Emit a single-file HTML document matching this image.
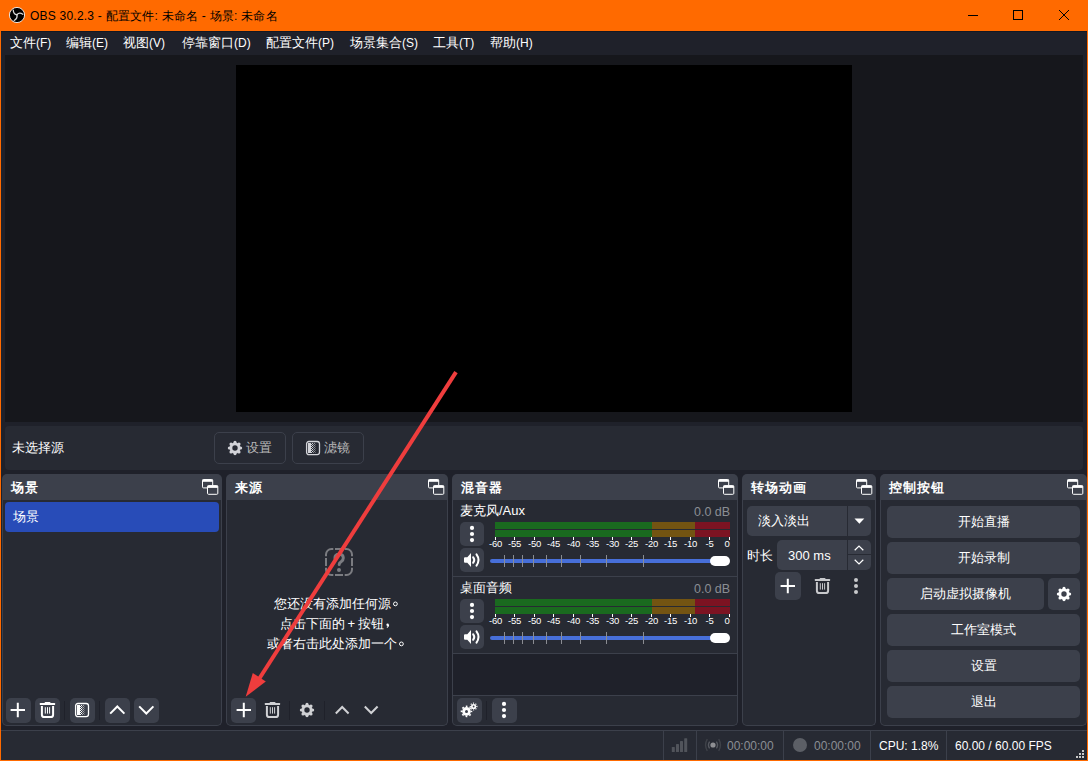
<!DOCTYPE html>
<html><head><meta charset="utf-8">
<style>
*{box-sizing:border-box;margin:0;padding:0}
html,body{width:1088px;height:761px;overflow:hidden}
body{background:#ff6a00;font-family:"Liberation Sans",sans-serif;font-size:13px;color:#fff;position:relative}
.a{position:absolute}
svg{position:absolute;overflow:visible}
.t{position:absolute;white-space:nowrap;line-height:15px}
#win{position:absolute;left:1px;top:31px;width:1086px;height:729px;background:#1f212a}
#menu{position:absolute;left:1px;top:31px;width:1086px;height:24px;background:#1f212a;border-top:1px solid #141823}
.mi{position:absolute;top:3px;font-size:13px;color:#fff;white-space:nowrap;line-height:15px}
.mi i{font-style:normal;font-size:12px}
#preview{position:absolute;left:5px;top:55px;width:1078px;height:367px;background:#16171c}
#canvas{position:absolute;left:236px;top:65px;width:616px;height:347px;background:#000}
#srcbar{position:absolute;left:5px;top:426px;width:1078px;height:44px;background:#272a33;border-radius:4px}
.tbtn{position:absolute;top:432px;height:32px;width:72px;border:1px solid #3c404b;border-radius:5px}
.dock{position:absolute;top:474px;height:252px}
.dt{position:absolute;left:0;top:0;right:0;height:26px;background:#3c404b;border-radius:5px 5px 0 0}
.dt b{position:absolute;left:9px;top:6px;font-size:13px;font-weight:bold;color:#fff;white-space:nowrap;line-height:15px;letter-spacing:1px}
.dc{position:absolute;left:0;top:26px;right:0;bottom:0;background:#272a33;border:1px solid #3c404b;border-top:none;border-radius:0 0 5px 5px}
.btn{position:absolute;width:25px;height:25px;border-radius:5px;background:#3c404b}
.sep{position:absolute;width:1px;height:19px;background:#1f212a}
#status{position:absolute;left:1px;top:730px;width:1086px;height:30px;background:#272a33;border-top:1px solid #3c404b}
.st{position:absolute;top:739px;font-size:12px;color:#fff;white-space:nowrap;line-height:14px}
.ssep{position:absolute;top:731px;width:1px;height:29px;background:#3c404b}
.cb{position:absolute;left:887px;width:193px;height:32px;background:#3c404b;border-radius:5px;text-align:center;line-height:32px;font-size:13px;color:#fff}
.pu{display:inline-block;width:13px;height:15px;vertical-align:top;position:relative}
.pu svg{left:0;top:0}
.lbl{position:absolute;font-size:9.5px;color:#fff;line-height:10px;white-space:nowrap;letter-spacing:-0.2px}
</style></head><body>
<!-- title bar -->
<svg style="left:8px;top:6px" width="18" height="18" viewBox="0 0 18 18">
<circle cx="9" cy="9" r="7.6" fill="#000" stroke="#f4f4f4" stroke-width="0.9"/>
<g fill="none" stroke="#d8d8d8" stroke-width="1.3" stroke-linecap="round">
<path d="M8.9 8.7Q5.4 8.3 5.3 4.2"/>
<path d="M8.9 8.7Q11.4 5.9 14.8 8.3"/>
<path d="M8.9 8.7Q9.8 12.4 6.2 14.5"/>
</g>
</svg>
<div class="t" style="left:30px;top:9px;font-size:12px;color:#000;letter-spacing:0.22px">OBS 30.2.3 - 配置文件: 未命名 - 场景: 未命名</div>
<svg style="left:960px;top:0" width="128" height="31" viewBox="0 0 128 31">
<path d="M8 15.5H18" stroke="#000" stroke-width="1"/>
<rect x="53.5" y="10.5" width="9" height="9" fill="none" stroke="#000" stroke-width="1"/>
<path d="M99 10L109 20M109 10L99 20" stroke="#000" stroke-width="1"/>
</svg>

<div id="win"></div>
<div id="menu">
<span class="mi" style="left:9px">文件<i>(F)</i></span>
<span class="mi" style="left:65px">编辑<i>(E)</i></span>
<span class="mi" style="left:122px">视图<i>(V)</i></span>
<span class="mi" style="left:181px">停靠窗口<i>(D)</i></span>
<span class="mi" style="left:265px">配置文件<i>(P)</i></span>
<span class="mi" style="left:349px">场景集合<i>(S)</i></span>
<span class="mi" style="left:432px">工具<i>(T)</i></span>
<span class="mi" style="left:489px">帮助<i>(H)</i></span>
</div>
<div id="preview"></div>
<div id="canvas"></div>

<!-- source toolbar -->
<div id="srcbar"></div>
<div class="t" style="left:12px;top:440px">未选择源</div>
<div class="tbtn" style="left:214px"></div>
<div class="tbtn" style="left:292px"></div>
<svg style="left:227px;top:440px" width="16" height="16" viewBox="0 0 16 16"><g fill="#d2d3d8"><circle cx="8" cy="8" r="5.5"/><circle cx="13.60" cy="8.00" r="1.6"/><circle cx="11.96" cy="11.96" r="1.6"/><circle cx="8.00" cy="13.60" r="1.6"/><circle cx="4.04" cy="11.96" r="1.6"/><circle cx="2.40" cy="8.00" r="1.6"/><circle cx="4.04" cy="4.04" r="1.6"/><circle cx="8.00" cy="2.40" r="1.6"/><circle cx="11.96" cy="4.04" r="1.6"/></g><circle cx="8" cy="8" r="2.7" fill="#272a33"/></svg>
<div class="t" style="left:246px;top:440px;color:#b8b8b8">设置</div>
<svg style="left:305px;top:440px" width="16" height="16" viewBox="0 0 16 16"><rect x="1.6" y="1.5" width="12.9" height="13.1" rx="2.3" fill="none" stroke="#d2d3d8" stroke-width="1.3"/><rect x="3" y="3" width="3" height="10" fill="#d2d3d8"/><rect x="7" y="3" width="1" height="1" fill="#d2d3d8"/><rect x="9" y="3" width="1" height="1" fill="#8e9096"/><rect x="6" y="4" width="1" height="1" fill="#d2d3d8"/><rect x="8" y="4" width="1" height="1" fill="#8e9096"/><rect x="10" y="4" width="1" height="1" fill="#5d5f66"/><rect x="7" y="5" width="1" height="1" fill="#d2d3d8"/><rect x="9" y="5" width="1" height="1" fill="#8e9096"/><rect x="6" y="6" width="1" height="1" fill="#d2d3d8"/><rect x="8" y="6" width="1" height="1" fill="#8e9096"/><rect x="10" y="6" width="1" height="1" fill="#5d5f66"/><rect x="7" y="7" width="1" height="1" fill="#d2d3d8"/><rect x="9" y="7" width="1" height="1" fill="#8e9096"/><rect x="6" y="8" width="1" height="1" fill="#d2d3d8"/><rect x="8" y="8" width="1" height="1" fill="#8e9096"/><rect x="10" y="8" width="1" height="1" fill="#5d5f66"/><rect x="7" y="9" width="1" height="1" fill="#d2d3d8"/><rect x="9" y="9" width="1" height="1" fill="#8e9096"/><rect x="6" y="10" width="1" height="1" fill="#d2d3d8"/><rect x="8" y="10" width="1" height="1" fill="#8e9096"/><rect x="10" y="10" width="1" height="1" fill="#5d5f66"/><rect x="7" y="11" width="1" height="1" fill="#d2d3d8"/><rect x="9" y="11" width="1" height="1" fill="#8e9096"/><rect x="6" y="12" width="1" height="1" fill="#d2d3d8"/><rect x="8" y="12" width="1" height="1" fill="#8e9096"/><rect x="10" y="12" width="1" height="1" fill="#5d5f66"/></svg>
<div class="t" style="left:324px;top:440px;color:#b8b8b8">滤镜</div>

<!-- docks -->
<div class="dock" style="left:2px;width:220px"><div class="dt"><b>场景</b></div><div class="dc"></div></div>
<div class="dock" style="left:226px;width:222px"><div class="dt"><b>来源</b></div><div class="dc"></div></div>
<div class="dock" style="left:452px;width:286px"><div class="dt"><b>混音器</b></div><div class="dc"></div></div>
<div class="dock" style="left:742px;width:134px"><div class="dt"><b>转场动画</b></div><div class="dc"></div></div>
<div class="dock" style="left:880px;width:207px"><div class="dt"><b>控制按钮</b></div><div class="dc"></div></div>

<!-- float icons -->
<svg style="left:202px;top:479px" width="17" height="17" viewBox="0 0 17 17" id="fl1">
<rect x="0.5" y="0.5" width="10.2" height="8.4" rx="1" fill="none" stroke="#fff" stroke-width="1"/>
<rect x="0.5" y="0.5" width="10.2" height="2.3" fill="#fff"/>
<rect x="5.5" y="6.6" width="10.3" height="8.7" rx="1" fill="#3c404b" stroke="#fff" stroke-width="1"/>
<rect x="5.5" y="6.6" width="10.3" height="2.3" fill="#fff"/>
</svg>
<svg style="left:428px;top:479px" width="17" height="17" viewBox="0 0 17 17">
<rect x="0.5" y="0.5" width="10.2" height="8.4" rx="1" fill="none" stroke="#fff" stroke-width="1"/>
<rect x="0.5" y="0.5" width="10.2" height="2.3" fill="#fff"/>
<rect x="5.5" y="6.6" width="10.3" height="8.7" rx="1" fill="#3c404b" stroke="#fff" stroke-width="1"/>
<rect x="5.5" y="6.6" width="10.3" height="2.3" fill="#fff"/>
</svg>
<svg style="left:718px;top:479px" width="17" height="17" viewBox="0 0 17 17">
<rect x="0.5" y="0.5" width="10.2" height="8.4" rx="1" fill="none" stroke="#fff" stroke-width="1"/>
<rect x="0.5" y="0.5" width="10.2" height="2.3" fill="#fff"/>
<rect x="5.5" y="6.6" width="10.3" height="8.7" rx="1" fill="#3c404b" stroke="#fff" stroke-width="1"/>
<rect x="5.5" y="6.6" width="10.3" height="2.3" fill="#fff"/>
</svg>
<svg style="left:856px;top:479px" width="17" height="17" viewBox="0 0 17 17">
<rect x="0.5" y="0.5" width="10.2" height="8.4" rx="1" fill="none" stroke="#fff" stroke-width="1"/>
<rect x="0.5" y="0.5" width="10.2" height="2.3" fill="#fff"/>
<rect x="5.5" y="6.6" width="10.3" height="8.7" rx="1" fill="#3c404b" stroke="#fff" stroke-width="1"/>
<rect x="5.5" y="6.6" width="10.3" height="2.3" fill="#fff"/>
</svg>
<svg style="left:1067px;top:479px" width="17" height="17" viewBox="0 0 17 17">
<rect x="0.5" y="0.5" width="10.2" height="8.4" rx="1" fill="none" stroke="#fff" stroke-width="1"/>
<rect x="0.5" y="0.5" width="10.2" height="2.3" fill="#fff"/>
<rect x="5.5" y="6.6" width="10.3" height="8.7" rx="1" fill="#3c404b" stroke="#fff" stroke-width="1"/>
<rect x="5.5" y="6.6" width="10.3" height="2.3" fill="#fff"/>
</svg>

<!-- SCENE dock content -->
<div class="a" style="left:5px;top:502px;width:214px;height:30px;background:#284cb8;border-radius:4px"></div>
<div class="t" style="left:13px;top:509px">场景</div>
<div class="btn" style="left:6px;top:698px"></div>
<div class="btn" style="left:35px;top:698px"></div>
<div class="sep" style="left:64px;top:701px"></div>
<div class="btn" style="left:70px;top:698px"></div>
<div class="sep" style="left:99px;top:701px"></div>
<div class="btn" style="left:105px;top:698px"></div>
<div class="btn" style="left:134px;top:698px"></div>
<svg style="left:10px;top:702px" width="16" height="16" viewBox="0 0 16 16"><path d="M7.8 0.8V15.2M0.6 8H15" stroke="#fff" stroke-width="2"/></svg>
<svg style="left:39px;top:701px" width="17" height="18" viewBox="0 0 17 18" id="trash">
<rect x="0.8" y="1.9" width="15.3" height="2.1" rx="0.6" fill="#fff"/>
<rect x="5.6" y="0.9" width="5.9" height="2" rx="0.8" fill="#fff"/>
<path d="M2.9 5V13.7Q2.9 16.1 5.3 16.1H11.7Q14.1 16.1 14.1 13.7V5" fill="none" stroke="#fff" stroke-width="2"/>
<path d="M6.3 6.2V12.6M8.5 6.2V12.6M10.6 6.2V12.6" stroke="#fff" stroke-width="1"/>
</svg>
<svg style="left:74px;top:702px" width="16" height="16" viewBox="0 0 16 16"><rect x="1.6" y="1.5" width="12.9" height="13.1" rx="2.3" fill="none" stroke="#fff" stroke-width="1.3"/><rect x="3" y="3" width="3" height="10" fill="#fff"/><rect x="7" y="3" width="1" height="1" fill="#fff"/><rect x="9" y="3" width="1" height="1" fill="#a8a9ad"/><rect x="6" y="4" width="1" height="1" fill="#fff"/><rect x="8" y="4" width="1" height="1" fill="#a8a9ad"/><rect x="10" y="4" width="1" height="1" fill="#6a6c72"/><rect x="7" y="5" width="1" height="1" fill="#fff"/><rect x="9" y="5" width="1" height="1" fill="#a8a9ad"/><rect x="6" y="6" width="1" height="1" fill="#fff"/><rect x="8" y="6" width="1" height="1" fill="#a8a9ad"/><rect x="10" y="6" width="1" height="1" fill="#6a6c72"/><rect x="7" y="7" width="1" height="1" fill="#fff"/><rect x="9" y="7" width="1" height="1" fill="#a8a9ad"/><rect x="6" y="8" width="1" height="1" fill="#fff"/><rect x="8" y="8" width="1" height="1" fill="#a8a9ad"/><rect x="10" y="8" width="1" height="1" fill="#6a6c72"/><rect x="7" y="9" width="1" height="1" fill="#fff"/><rect x="9" y="9" width="1" height="1" fill="#a8a9ad"/><rect x="6" y="10" width="1" height="1" fill="#fff"/><rect x="8" y="10" width="1" height="1" fill="#a8a9ad"/><rect x="10" y="10" width="1" height="1" fill="#6a6c72"/><rect x="7" y="11" width="1" height="1" fill="#fff"/><rect x="9" y="11" width="1" height="1" fill="#a8a9ad"/><rect x="6" y="12" width="1" height="1" fill="#fff"/><rect x="8" y="12" width="1" height="1" fill="#a8a9ad"/><rect x="10" y="12" width="1" height="1" fill="#6a6c72"/></svg>
<svg style="left:109px;top:705px" width="17" height="10" viewBox="0 0 17 10"><path d="M1.2 8.6L8.3 1.5L15.4 8.6" fill="none" stroke="#fff" stroke-width="2"/></svg>
<svg style="left:138px;top:705px" width="17" height="10" viewBox="0 0 17 10"><path d="M1.2 1.4L8.3 8.5L15.4 1.4" fill="none" stroke="#fff" stroke-width="2"/></svg>

<!-- SOURCES dock content -->
<svg style="left:325px;top:548px" width="29" height="29" viewBox="0 0 29 29">
<path d="M1 8.3V6.5A5.5 5.5 0 0 1 6.5 1H8.3M19.7 1H21.5A5.5 5.5 0 0 1 27 6.5V8.3M27 19.7V21.5A5.5 5.5 0 0 1 21.5 27H19.7M8.3 27H6.5A5.5 5.5 0 0 1 1 21.5V19.7M10 1H18M27 10V18M18 27H10M1 18V10" fill="none" stroke="#7b7c81" stroke-width="2"/>
<path d="M9.9 10.3Q9.9 6.3 14.1 6.3Q18.3 6.3 18.3 10Q18.3 12.4 16.1 13.7Q14.2 14.8 14.2 16.6" fill="none" stroke="#7b7c81" stroke-width="3" stroke-linecap="round"/>
<circle cx="14" cy="21.9" r="2" fill="#7b7c81"/>
</svg>
<div class="t" style="left:274px;top:596px">您还没有添加任何源<span class="pu"><svg width="13" height="15" viewBox="0 0 13 15"><circle cx="4.4" cy="7.9" r="1.9" fill="none" stroke="#fff" stroke-width="1"/></svg></span></div>
<div class="t" style="left:280px;top:616px;word-spacing:-1px">点击下面的 + 按钮<span class="pu"><svg width="13" height="15" viewBox="0 0 13 15"><circle cx="3.6" cy="8.7" r="1.2" fill="#fff"/><path d="M4.6 8.9Q4.7 10.6 2.9 11.6" fill="none" stroke="#fff" stroke-width="1.2"/></svg></span></div>
<div class="t" style="left:267px;top:636px">或者右击此处添加一个<span class="pu"><svg width="13" height="15" viewBox="0 0 13 15"><circle cx="4.4" cy="7.9" r="1.9" fill="none" stroke="#fff" stroke-width="1"/></svg></span></div>
<div class="btn" style="left:231px;top:698px"></div>
<svg style="left:236px;top:702px" width="16" height="16" viewBox="0 0 16 16"><path d="M7.8 0.8V15.2M0.6 8H15" stroke="#fff" stroke-width="2"/></svg>
<svg style="left:264px;top:701px" width="17" height="18" viewBox="0 0 17 18">
<rect x="0.8" y="1.9" width="15.3" height="2.1" rx="0.6" fill="#d0d1d4"/>
<rect x="5.6" y="0.9" width="5.9" height="2" rx="0.8" fill="#d0d1d4"/>
<path d="M2.9 5V13.7Q2.9 16.1 5.3 16.1H11.7Q14.1 16.1 14.1 13.7V5" fill="none" stroke="#d0d1d4" stroke-width="2"/>
<path d="M6.3 6.2V12.6M8.5 6.2V12.6M10.6 6.2V12.6" stroke="#d0d1d4" stroke-width="1"/>
</svg>
<div class="sep" style="left:289px;top:701px"></div>
<svg style="left:299px;top:702px" width="16" height="16" viewBox="0 0 16 16"><g fill="#d0d1d4"><circle cx="8" cy="8" r="5.5"/><circle cx="13.60" cy="8.00" r="1.6"/><circle cx="11.96" cy="11.96" r="1.6"/><circle cx="8.00" cy="13.60" r="1.6"/><circle cx="4.04" cy="11.96" r="1.6"/><circle cx="2.40" cy="8.00" r="1.6"/><circle cx="4.04" cy="4.04" r="1.6"/><circle cx="8.00" cy="2.40" r="1.6"/><circle cx="11.96" cy="4.04" r="1.6"/></g><circle cx="8" cy="8" r="2.7" fill="#272a33"/></svg>
<div class="sep" style="left:324px;top:701px"></div>
<svg style="left:335px;top:705px" width="15" height="10" viewBox="0 0 15 10"><path d="M0.8 8.5L7.2 2L13.6 8.5" fill="none" stroke="#d0d1d4" stroke-width="2"/></svg>
<svg style="left:364px;top:705px" width="15" height="10" viewBox="0 0 15 10"><path d="M0.8 1.5L7.2 8L13.6 1.5" fill="none" stroke="#d0d1d4" stroke-width="2"/></svg>

<!-- MIXER dock content -->
<div class="a" style="left:453px;top:576px;width:284px;height:1px;background:#3c404b"></div>
<div class="a" style="left:453px;top:653px;width:284px;height:1px;background:#3c404b"></div>
<div class="a" style="left:453px;top:654px;width:284px;height:41px;background:#1f212a"></div>
<div class="a" style="left:453px;top:695px;width:284px;height:1px;background:#3c404b"></div>

<!-- MIXER items -->
<div class="t" style="left:460px;top:503px">麦克风/Aux</div>
<div class="t" style="left:694px;top:505px;font-size:12.5px;color:#8b8e94">0.0 dB</div>
<div class="btn" style="left:460px;top:522px;width:24px;height:24px"></div>
<div class="btn" style="left:460px;top:548px;width:24px;height:24px"></div>
<svg style="left:460px;top:522px" width="24" height="24" viewBox="0 0 24 24"><g fill="#fff"><circle cx="12" cy="5.9" r="2.1"/><circle cx="12" cy="12" r="2.1"/><circle cx="12" cy="18.1" r="2.1"/></g></svg>
<svg style="left:460px;top:548px" width="24" height="24" viewBox="0 0 24 24"><path d="M5 9.3H7.3L11 5.1V18.9L7.3 14.7H5Q4 14.7 4 13.7V10.3Q4 9.3 5 9.3Z" fill="#fff"/><path d="M13.1 9.2Q15.4 12 13.1 14.8" fill="none" stroke="#fff" stroke-width="2" stroke-linecap="round"/><path d="M16.5 6.4Q20.5 12 16.5 17.6" fill="none" stroke="#fff" stroke-width="2" stroke-linecap="round"/></svg>
<div class="a" style="left:495px;top:522px;width:157px;height:7px;background:#1a6a1f"></div>
<div class="a" style="left:652px;top:522px;width:43px;height:7px;background:#735412"></div>
<div class="a" style="left:695px;top:522px;width:35px;height:7px;background:#7c1322"></div>
<div class="a" style="left:495px;top:530px;width:157px;height:7px;background:#1a6a1f"></div>
<div class="a" style="left:652px;top:530px;width:43px;height:7px;background:#735412"></div>
<div class="a" style="left:695px;top:530px;width:35px;height:7px;background:#7c1322"></div>
<div class="a" style="left:495px;top:537px;width:1px;height:3px;background:#fff"></div>
<div class="lbl" style="left:475.5px;width:40px;text-align:center;top:539px">-60</div>
<div class="a" style="left:514px;top:537px;width:1px;height:3px;background:#fff"></div>
<div class="lbl" style="left:494.5px;width:40px;text-align:center;top:539px">-55</div>
<div class="a" style="left:534px;top:537px;width:1px;height:3px;background:#fff"></div>
<div class="lbl" style="left:514.5px;width:40px;text-align:center;top:539px">-50</div>
<div class="a" style="left:553px;top:537px;width:1px;height:3px;background:#fff"></div>
<div class="lbl" style="left:533.5px;width:40px;text-align:center;top:539px">-45</div>
<div class="a" style="left:573px;top:537px;width:1px;height:3px;background:#fff"></div>
<div class="lbl" style="left:553.5px;width:40px;text-align:center;top:539px">-40</div>
<div class="a" style="left:592px;top:537px;width:1px;height:3px;background:#fff"></div>
<div class="lbl" style="left:572.5px;width:40px;text-align:center;top:539px">-35</div>
<div class="a" style="left:612px;top:537px;width:1px;height:3px;background:#fff"></div>
<div class="lbl" style="left:592.5px;width:40px;text-align:center;top:539px">-30</div>
<div class="a" style="left:631px;top:537px;width:1px;height:3px;background:#fff"></div>
<div class="lbl" style="left:611.5px;width:40px;text-align:center;top:539px">-25</div>
<div class="a" style="left:651px;top:537px;width:1px;height:3px;background:#fff"></div>
<div class="lbl" style="left:631.5px;width:40px;text-align:center;top:539px">-20</div>
<div class="a" style="left:670px;top:537px;width:1px;height:3px;background:#fff"></div>
<div class="lbl" style="left:650.5px;width:40px;text-align:center;top:539px">-15</div>
<div class="a" style="left:690px;top:537px;width:1px;height:3px;background:#fff"></div>
<div class="lbl" style="left:670.5px;width:40px;text-align:center;top:539px">-10</div>
<div class="a" style="left:709px;top:537px;width:1px;height:3px;background:#fff"></div>
<div class="lbl" style="left:689.5px;width:40px;text-align:center;top:539px">-5</div>
<div class="a" style="left:729px;top:537px;width:1px;height:3px;background:#fff"></div>
<div class="lbl" style="right:358.5px;top:539px">0</div>
<div class="a" style="left:490px;top:559px;width:228px;height:4px;background:#476fd9;border-radius:2px"></div>
<div class="a" style="left:504px;top:555px;width:1px;height:12px;background:#8a8c92"></div>
<div class="a" style="left:513px;top:555px;width:1px;height:12px;background:#8a8c92"></div>
<div class="a" style="left:522px;top:555px;width:1px;height:12px;background:#8a8c92"></div>
<div class="a" style="left:533px;top:555px;width:1px;height:12px;background:#8a8c92"></div>
<div class="a" style="left:546px;top:555px;width:1px;height:12px;background:#8a8c92"></div>
<div class="a" style="left:561px;top:555px;width:1px;height:12px;background:#8a8c92"></div>
<div class="a" style="left:580px;top:555px;width:1px;height:12px;background:#8a8c92"></div>
<div class="a" style="left:606px;top:555px;width:1px;height:12px;background:#8a8c92"></div>
<div class="a" style="left:643px;top:555px;width:1px;height:12px;background:#8a8c92"></div>
<div class="a" style="left:710px;top:556px;width:20px;height:10px;background:#fff;border-radius:5px"></div>
<div class="t" style="left:460px;top:580px">桌面音频</div>
<div class="t" style="left:694px;top:582px;font-size:12.5px;color:#8b8e94">0.0 dB</div>
<div class="btn" style="left:460px;top:599px;width:24px;height:24px"></div>
<div class="btn" style="left:460px;top:625px;width:24px;height:24px"></div>
<svg style="left:460px;top:599px" width="24" height="24" viewBox="0 0 24 24"><g fill="#fff"><circle cx="12" cy="5.9" r="2.1"/><circle cx="12" cy="12" r="2.1"/><circle cx="12" cy="18.1" r="2.1"/></g></svg>
<svg style="left:460px;top:625px" width="24" height="24" viewBox="0 0 24 24"><path d="M5 9.3H7.3L11 5.1V18.9L7.3 14.7H5Q4 14.7 4 13.7V10.3Q4 9.3 5 9.3Z" fill="#fff"/><path d="M13.1 9.2Q15.4 12 13.1 14.8" fill="none" stroke="#fff" stroke-width="2" stroke-linecap="round"/><path d="M16.5 6.4Q20.5 12 16.5 17.6" fill="none" stroke="#fff" stroke-width="2" stroke-linecap="round"/></svg>
<div class="a" style="left:495px;top:599px;width:157px;height:7px;background:#1a6a1f"></div>
<div class="a" style="left:652px;top:599px;width:43px;height:7px;background:#735412"></div>
<div class="a" style="left:695px;top:599px;width:35px;height:7px;background:#7c1322"></div>
<div class="a" style="left:495px;top:607px;width:157px;height:7px;background:#1a6a1f"></div>
<div class="a" style="left:652px;top:607px;width:43px;height:7px;background:#735412"></div>
<div class="a" style="left:695px;top:607px;width:35px;height:7px;background:#7c1322"></div>
<div class="a" style="left:495px;top:614px;width:1px;height:3px;background:#fff"></div>
<div class="lbl" style="left:475.5px;width:40px;text-align:center;top:616px">-60</div>
<div class="a" style="left:514px;top:614px;width:1px;height:3px;background:#fff"></div>
<div class="lbl" style="left:494.5px;width:40px;text-align:center;top:616px">-55</div>
<div class="a" style="left:534px;top:614px;width:1px;height:3px;background:#fff"></div>
<div class="lbl" style="left:514.5px;width:40px;text-align:center;top:616px">-50</div>
<div class="a" style="left:553px;top:614px;width:1px;height:3px;background:#fff"></div>
<div class="lbl" style="left:533.5px;width:40px;text-align:center;top:616px">-45</div>
<div class="a" style="left:573px;top:614px;width:1px;height:3px;background:#fff"></div>
<div class="lbl" style="left:553.5px;width:40px;text-align:center;top:616px">-40</div>
<div class="a" style="left:592px;top:614px;width:1px;height:3px;background:#fff"></div>
<div class="lbl" style="left:572.5px;width:40px;text-align:center;top:616px">-35</div>
<div class="a" style="left:612px;top:614px;width:1px;height:3px;background:#fff"></div>
<div class="lbl" style="left:592.5px;width:40px;text-align:center;top:616px">-30</div>
<div class="a" style="left:631px;top:614px;width:1px;height:3px;background:#fff"></div>
<div class="lbl" style="left:611.5px;width:40px;text-align:center;top:616px">-25</div>
<div class="a" style="left:651px;top:614px;width:1px;height:3px;background:#fff"></div>
<div class="lbl" style="left:631.5px;width:40px;text-align:center;top:616px">-20</div>
<div class="a" style="left:670px;top:614px;width:1px;height:3px;background:#fff"></div>
<div class="lbl" style="left:650.5px;width:40px;text-align:center;top:616px">-15</div>
<div class="a" style="left:690px;top:614px;width:1px;height:3px;background:#fff"></div>
<div class="lbl" style="left:670.5px;width:40px;text-align:center;top:616px">-10</div>
<div class="a" style="left:709px;top:614px;width:1px;height:3px;background:#fff"></div>
<div class="lbl" style="left:689.5px;width:40px;text-align:center;top:616px">-5</div>
<div class="a" style="left:729px;top:614px;width:1px;height:3px;background:#fff"></div>
<div class="lbl" style="right:358.5px;top:616px">0</div>
<div class="a" style="left:490px;top:636px;width:228px;height:4px;background:#476fd9;border-radius:2px"></div>
<div class="a" style="left:504px;top:632px;width:1px;height:12px;background:#8a8c92"></div>
<div class="a" style="left:513px;top:632px;width:1px;height:12px;background:#8a8c92"></div>
<div class="a" style="left:522px;top:632px;width:1px;height:12px;background:#8a8c92"></div>
<div class="a" style="left:533px;top:632px;width:1px;height:12px;background:#8a8c92"></div>
<div class="a" style="left:546px;top:632px;width:1px;height:12px;background:#8a8c92"></div>
<div class="a" style="left:561px;top:632px;width:1px;height:12px;background:#8a8c92"></div>
<div class="a" style="left:580px;top:632px;width:1px;height:12px;background:#8a8c92"></div>
<div class="a" style="left:606px;top:632px;width:1px;height:12px;background:#8a8c92"></div>
<div class="a" style="left:643px;top:632px;width:1px;height:12px;background:#8a8c92"></div>
<div class="a" style="left:710px;top:633px;width:20px;height:10px;background:#fff;border-radius:5px"></div>
<div class="btn" style="left:457px;top:698px"></div>
<svg style="left:457px;top:698px" width="25" height="25" viewBox="0 0 25 25">
<circle cx="9.5" cy="13.4" r="4.3" fill="#fff"/>
<circle cx="9.5" cy="13.4" r="5" fill="none" stroke="#fff" stroke-width="1.6" stroke-dasharray="1.732 2.117" stroke-dashoffset="0.866"/>
<circle cx="9.5" cy="13.4" r="1.5" fill="#3c404b"/>
<circle cx="16.6" cy="8.5" r="2.6" fill="#fff"/>
<circle cx="16.6" cy="8.5" r="3.3" fill="none" stroke="#fff" stroke-width="1.2" stroke-dasharray="1.131 1.382" stroke-dashoffset="0.565"/>
<circle cx="16.6" cy="8.5" r="0.9" fill="#3c404b"/>
</svg>
<div class="sep" style="left:486px;top:701px"></div>
<div class="btn" style="left:492px;top:698px"></div>
<svg style="left:492px;top:698px" width="25" height="25" viewBox="0 0 25 25"><g fill="#fff"><circle cx="12" cy="5.9" r="2.1"/><circle cx="12" cy="12" r="2.1"/><circle cx="12" cy="18.1" r="2.1"/></g></svg>


<!-- TRANSITIONS dock content -->
<div class="a" style="left:747px;top:506px;width:124px;height:30px;background:#3c404b;border-radius:5px"></div>
<div class="a" style="left:847px;top:506px;width:1px;height:30px;background:#272a33"></div>
<div class="t" style="left:758px;top:513px">淡入淡出</div>
<svg style="left:854px;top:518px" width="11" height="7" viewBox="0 0 11 7"><path d="M0.5 0.5H10.3L5.4 5.8Z" fill="#fff"/></svg>
<div class="t" style="left:747px;top:548px">时长</div>
<div class="a" style="left:777px;top:540px;width:94px;height:30px;background:#3c404b;border-radius:5px"></div>
<div class="a" style="left:847px;top:540px;width:1px;height:30px;background:#272a33"></div>
<div class="a" style="left:848px;top:554px;width:23px;height:1px;background:#272a33"></div>
<div class="t" style="left:788px;top:548px">300 ms</div>
<svg style="left:854px;top:545px" width="10" height="6" viewBox="0 0 10 6"><path d="M0.7 5.2L5 1L9.3 5.2" fill="none" stroke="#fff" stroke-width="1.2"/></svg>
<svg style="left:854px;top:559px" width="10" height="6" viewBox="0 0 10 6"><path d="M0.7 0.8L5 5L9.3 0.8" fill="none" stroke="#fff" stroke-width="1.2"/></svg>
<div class="btn" style="left:775px;top:572px;width:26px;height:28px"></div>
<svg style="left:780px;top:578px" width="16" height="16" viewBox="0 0 16 16"><path d="M7.8 0.8V15.2M0.6 8H15" stroke="#fff" stroke-width="2"/></svg>
<svg style="left:814px;top:577px" width="17" height="18" viewBox="0 0 17 18">
<rect x="0.8" y="1.9" width="15.3" height="2.1" rx="0.6" fill="#c8c9cc"/>
<rect x="5.6" y="0.9" width="5.9" height="2" rx="0.8" fill="#c8c9cc"/>
<path d="M2.9 5V13.7Q2.9 16.1 5.3 16.1H11.7Q14.1 16.1 14.1 13.7V5" fill="none" stroke="#c8c9cc" stroke-width="2"/>
<path d="M6.3 6.2V12.6M8.5 6.2V12.6M10.6 6.2V12.6" stroke="#c8c9cc" stroke-width="1"/>
</svg>
<svg style="left:850px;top:576px" width="12" height="20" viewBox="0 0 12 20"><g fill="#c8c9cc"><circle cx="6" cy="4.1" r="2"/><circle cx="6" cy="10" r="2"/><circle cx="6" cy="15.9" r="2"/></g></svg>

<!-- CONTROLS dock content -->
<div class="cb" style="top:506px">开始直播</div>
<div class="cb" style="top:542px">开始录制</div>
<div class="cb" style="top:578px;width:157px">启动虚拟摄像机</div>
<div class="btn" style="left:1048px;top:578px;width:32px;height:32px"></div>
<svg style="left:1056px;top:586px" width="16" height="16" viewBox="0 0 16 16"><g fill="#fff"><circle cx="8" cy="8" r="5.5"/><circle cx="13.60" cy="8.00" r="1.6"/><circle cx="11.96" cy="11.96" r="1.6"/><circle cx="8.00" cy="13.60" r="1.6"/><circle cx="4.04" cy="11.96" r="1.6"/><circle cx="2.40" cy="8.00" r="1.6"/><circle cx="4.04" cy="4.04" r="1.6"/><circle cx="8.00" cy="2.40" r="1.6"/><circle cx="11.96" cy="4.04" r="1.6"/></g><circle cx="8" cy="8" r="2.7" fill="#3c404b"/></svg>
<div class="cb" style="top:614px">工作室模式</div>
<div class="cb" style="top:650px">设置</div>
<div class="cb" style="top:686px">退出</div>

<!-- status bar -->
<div id="status"></div>
<div class="ssep" style="left:663px"></div>
<div class="ssep" style="left:696px"></div>
<div class="ssep" style="left:783px"></div>
<div class="ssep" style="left:870px"></div>
<div class="ssep" style="left:946px"></div>
<svg style="left:671px;top:738px" width="17" height="15" viewBox="0 0 17 15"><g fill="#51545b"><rect x="0.8" y="9" width="3" height="5" rx="0.6"/><rect x="5" y="6" width="3" height="8" rx="0.6"/><rect x="9" y="3" width="3" height="11" rx="0.6"/><rect x="13.2" y="0.2" width="3" height="13.8" rx="0.6"/></g></svg>
<svg style="left:703px;top:737px" width="20" height="16" viewBox="0 0 20 16">
<circle cx="10" cy="8" r="2.6" fill="#8e8f93"/>
<path d="M6.6 4.6Q4.3 8 6.6 11.4M13.4 4.6Q15.7 8 13.4 11.4" fill="none" stroke="#55585f" stroke-width="1.4"/>
<path d="M4.3 2.2Q0.8 8 4.3 13.8M15.7 2.2Q19.2 8 15.7 13.8" fill="none" stroke="#3f4249" stroke-width="1.4"/>
</svg>
<div class="st" style="left:727px;color:#8b8e94">00:00:00</div>
<svg style="left:792px;top:737px" width="16" height="16" viewBox="0 0 16 16"><circle cx="8" cy="8" r="7" fill="#5c5f66"/></svg>
<div class="st" style="left:814px;color:#8b8e94">00:00:00</div>
<div class="st" style="left:879px">CPU: 1.8%</div>
<div class="st" style="left:955px">60.00 / 60.00 FPS</div>
<svg style="left:1076px;top:750px" width="9" height="9" viewBox="0 0 9 9"><g fill="#c9c9c9"><rect x="6" y="0" width="2" height="2"/><rect x="3" y="3" width="2" height="2"/><rect x="6" y="3" width="2" height="2"/><rect x="0" y="6" width="2" height="2"/><rect x="3" y="6" width="2" height="2"/><rect x="6" y="6" width="2" height="2"/></g></svg>

<!-- red arrow -->
<svg style="left:0;top:0" width="1088" height="761" viewBox="0 0 1088 761">
<path d="M456 372.2L258.4 680" stroke="#ef3d3d" stroke-width="4"/>
<path d="M245.7 696.8L252.8 673.1L265.8 681.4Z" fill="#ef3d3d"/>
</svg>
</body></html>
